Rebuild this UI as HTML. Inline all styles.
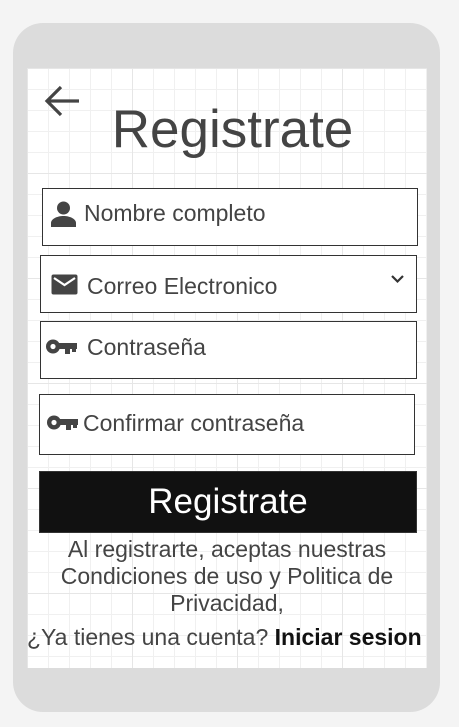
<!DOCTYPE html>
<html><head><meta charset="utf-8"><style>
*{margin:0;padding:0;box-sizing:border-box}
body{width:459px;height:727px;background:#f4f4f4;position:relative;overflow:hidden;font-family:"Liberation Sans",sans-serif;color:#444}
.phone{position:absolute;left:13px;top:23px;width:427px;height:689px;background:#dcdcdc;border-radius:30px}
.screen{position:absolute;left:27px;top:68px;width:400px;height:600px;background-color:#fff;
background-image:linear-gradient(#e6e6e6 1px,transparent 1px),linear-gradient(90deg,#e6e6e6 1px,transparent 1px),linear-gradient(#f0f0f0 1px,transparent 1px),linear-gradient(90deg,#f0f0f0 1px,transparent 1px);
background-size:105px 105px,105px 105px,21px 21px,21px 21px;background-position:0 0,0 0,0 0,0 0}
.abs{position:absolute}
.box{position:absolute;border:1px solid #333;background:#fff}
.t{position:absolute;font-size:23px;color:#444;white-space:nowrap}
svg{position:absolute}
</style></head><body>
<div class="phone"></div>
<div class="screen"></div>
<svg style="left:42px;top:84px" width="40" height="36" viewBox="0 0 40 36"><path d="M37 17H6M19 3L5 17L19 31" stroke="#444" stroke-width="3.2" fill="none"/></svg>
<div class="abs" style="left:0;width:465px;text-align:center;top:100px;font-size:53px;color:#444;line-height:60px">Registrate</div>

<div class="box" style="left:42px;top:188px;width:376px;height:58px"></div>
<svg style="left:50px;top:200px" width="27" height="28" viewBox="0 0 27 28"><circle cx="13.5" cy="8" r="6.5" fill="#444"/><path d="M1 27v-4c0-4 6-7 12.5-7s12.5 3 12.5 7v4z" fill="#444"/></svg>
<div class="t" style="left:84px;top:200px">Nombre completo</div>

<div class="box" style="left:40px;top:255px;width:377px;height:58px"></div>
<svg style="left:51px;top:274px" width="27" height="22" viewBox="0 0 27 22"><rect x="0.5" y="0.5" width="26" height="20" rx="2" fill="#444"/><path d="M3 4l10.5 7L24 4" stroke="#fff" stroke-width="2.2" fill="none"/></svg>
<div class="t" style="left:87px;top:273px">Correo Electronico</div>
<svg style="left:390px;top:274px" width="15" height="10" viewBox="0 0 15 10"><path d="M2 2l5.5 5.5L13 2" stroke="#333" stroke-width="2.2" fill="none"/></svg>

<div class="box" style="left:40px;top:321px;width:377px;height:58px"></div>
<svg style="left:44px;top:337px" width="33" height="19" viewBox="0 0 33 19"><circle cx="9" cy="9.5" r="7" fill="#444"/><circle cx="9" cy="9.5" r="2.6" fill="#fff"/><rect x="14" y="6" width="19" height="6" fill="#444"/><rect x="21" y="11" width="5" height="6" fill="#444"/><rect x="28" y="11" width="4" height="4" fill="#444"/></svg>
<div class="t" style="left:87px;top:334px">Contraseña</div>

<div class="box" style="left:39px;top:394px;width:376px;height:61px"></div>
<svg style="left:45px;top:413px" width="33" height="19" viewBox="0 0 33 19"><circle cx="9" cy="9.5" r="7" fill="#444"/><circle cx="9" cy="9.5" r="2.6" fill="#fff"/><rect x="14" y="6" width="19" height="6" fill="#444"/><rect x="21" y="11" width="5" height="6" fill="#444"/><rect x="28" y="11" width="4" height="4" fill="#444"/></svg>
<div class="t" style="left:83px;top:410px">Confirmar contraseña</div>

<div class="abs" style="left:39px;top:471px;width:378px;height:62px;background:#111;border:1px solid #333;color:#fff;font-size:35px;text-align:center;line-height:60px">Registrate</div>

<div class="abs" style="left:17px;width:420px;top:536px;text-align:center;font-size:23px;line-height:27px;color:#444">Al registrarte, aceptas nuestras<br>Condiciones de uso y Politica de<br>Privacidad,</div>
<div class="abs" style="left:27px;top:624px;font-size:23px;white-space:nowrap;color:#444">¿Ya tienes una cuenta? <b style="color:#111">Iniciar sesion</b></div>
</body></html>
